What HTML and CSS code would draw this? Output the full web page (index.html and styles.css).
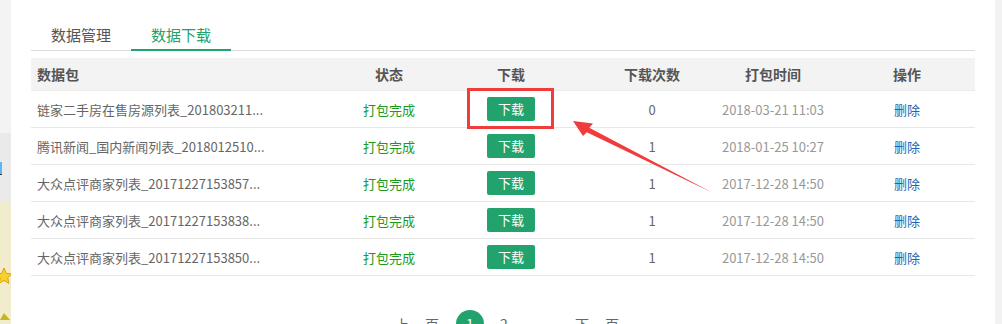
FILE: index.html
```html
<!DOCTYPE html>
<html lang="zh-CN">
<head>
  <meta charset="UTF-8" />
  <title>数据下载</title>
  <link rel="stylesheet" href="styles.css">
</head>
<body>
  <div class="page">
    <aside class="side-left">
      <div class="side-top"></div>
      <div class="side-mid"><span class="side-mark"></span></div>
      <div class="side-bottom">
        <svg class="side-star" width="18" height="18" viewBox="0 0 18 18">
          <polygon points="9,1 11.3,6.4 17,6.9 12.7,10.7 14,16.4 9,13.4 4,16.4 5.3,10.7 1,6.9 6.7,6.4" fill="#f7d02a" stroke="#e0a400" stroke-width="1"/>
        </svg>
        <svg class="side-tri" width="11" height="8" viewBox="0 0 11 8">
          <polygon points="4,0 10,7 0,7" fill="#c9b41c"/>
        </svg>
      </div>
    </aside>

    <main class="panel">
      <ul class="tabs">
        <li class="tab">数据管理</li>
        <li class="tab active">数据下载</li>
      </ul>

      <table class="grid">
        <colgroup>
          <col style="width:322px"><col style="width:72px"><col style="width:172px">
          <col style="width:110px"><col style="width:132px"><col style="width:136px">
        </colgroup>
        <thead>
          <tr>
            <th class="name">数据包</th>
            <th>状态</th>
            <th>下载</th>
            <th>下载次数</th>
            <th>打包时间</th>
            <th>操作</th>
          </tr>
        </thead>
        <tbody>
          <tr>
            <td class="name">链家二手房在售房源列表_201803211...</td>
            <td class="status">打包完成</td>
            <td><button class="btn-dl">下载</button></td>
            <td>0</td>
            <td class="time">2018-03-21 11:03</td>
            <td><a class="del">删除</a></td>
          </tr>
          <tr>
            <td class="name">腾讯新闻_国内新闻列表_2018012510...</td>
            <td class="status">打包完成</td>
            <td><button class="btn-dl">下载</button></td>
            <td>1</td>
            <td class="time">2018-01-25 10:27</td>
            <td><a class="del">删除</a></td>
          </tr>
          <tr>
            <td class="name">大众点评商家列表_20171227153857...</td>
            <td class="status">打包完成</td>
            <td><button class="btn-dl">下载</button></td>
            <td>1</td>
            <td class="time">2017-12-28 14:50</td>
            <td><a class="del">删除</a></td>
          </tr>
          <tr>
            <td class="name">大众点评商家列表_20171227153838...</td>
            <td class="status">打包完成</td>
            <td><button class="btn-dl">下载</button></td>
            <td>1</td>
            <td class="time">2017-12-28 14:50</td>
            <td><a class="del">删除</a></td>
          </tr>
          <tr>
            <td class="name">大众点评商家列表_20171227153850...</td>
            <td class="status">打包完成</td>
            <td><button class="btn-dl">下载</button></td>
            <td>1</td>
            <td class="time">2017-12-28 14:50</td>
            <td><a class="del">删除</a></td>
          </tr>
        </tbody>
      </table>

      <div class="pager">
        <span class="pg-text">上一页</span>
        <span class="pg-num current">1</span>
        <span class="pg-num">2</span>
        <span class="pg-text next">下一页</span>
      </div>
    </main>

    <aside class="side-right"></aside>
  </div>

  <!-- screenshot annotation -->
  <svg class="callout" width="1002" height="324" viewBox="0 0 1002 324">
    <rect x="468.5" y="89.5" width="84" height="38" fill="none" stroke="#f03c3c" stroke-width="3"/>
    <polygon points="573,121 593,123.5 589.3,127.8 713,193 586.8,132.2 583,136" fill="#f03c3c"/>
  </svg>
</body>
</html>
```

FILE: styles.css
```css
html, body {
  margin: 0;
  padding: 0;
}
body {
  width: 1002px;
  height: 324px;
  overflow: hidden;
  position: relative;
  font-family: "Noto Sans CJK SC", "Liberation Sans", sans-serif;
  font-size: 13px;
  color: #666;
  background: #fff;
}
.page {
  display: flex;
  height: 324px;
}

/* left strip, a cut-off neighbour panel */
.side-left {
  width: 11px;
  flex: none;
  display: flex;
  flex-direction: column;
  overflow: hidden;
}
.side-top { height: 133px; background: #f3f3f3; }
.side-mid {
  height: 68px;
  background: #eaeaea;
  display: flex;
  flex-direction: column;
}
.side-mark {
  display: block;
  width: 2px;
  height: 12px;
  margin-top: 29px;
  background: #5fb6ee;
  border-bottom: 1px solid #333;
}
.side-bottom {
  flex: 1;
  background: #f1ecce;
  display: flex;
  flex-direction: column;
}
.side-star { margin: 66px 0 0 -5px; display: block; }
.side-tri { margin: 28px 0 0 0; display: block; }

.side-right {
  width: 7px;
  flex: none;
  background: #f2f2f2;
}

/* main panel */
.panel {
  flex: 1;
  padding: 21px 20px 0;
  min-width: 0;
}
.tabs {
  list-style: none;
  margin: 0;
  padding: 0;
  display: flex;
  border-bottom: 1px solid #ddd;
}
.tab {
  width: 100px;
  height: 28px;
  line-height: 28px;
  text-align: center;
  font-size: 15px;
  color: #555;
  border-bottom: 2px solid transparent;
  margin-bottom: -1px;
}
.tab.active {
  color: #22a36d;
  border-bottom-color: #22a36d;
}

.grid {
  margin-top: 7px;
  width: 944px;
  table-layout: fixed;
  border-collapse: collapse;
}
.grid th {
  height: 32px;
  padding: 0;
  background: #f3f3f3;
  font-size: 14px;
  font-weight: bold;
  color: #555;
  text-align: center;
  border-bottom: 1px solid #ececec;
}
.grid td {
  height: 36px;
  padding: 0;
  text-align: center;
  border-bottom: 1px solid #e8e8e8;
  white-space: nowrap;
  overflow: hidden;
}
.grid .name {
  text-align: left;
  padding-left: 6px;
}
.status { color: #1c9a1c; }
.time { color: #999; }
.del { color: #1f65b3; cursor: pointer; }
.btn-dl {
  display: inline-block;
  vertical-align: middle;
  width: 48px;
  height: 24px;
  padding: 0;
  border: none;
  border-radius: 2px;
  background: #22a36d;
  color: #fff;
  font-family: inherit;
  font-size: 13px;
  line-height: 24px;
  cursor: pointer;
}

.pager {
  margin: 34px 0 0 364px;
  display: flex;
  align-items: center;
}
.pg-text, .pg-num {
  font-size: 14px;
  color: #666;
  line-height: 28px;
}
.pg-text { letter-spacing: 1px; }
.pg-num {
  width: 28px;
  height: 28px;
  text-align: center;
  margin-left: 6px;
}
.pg-num.current {
  margin-left: 16px;
  border-radius: 50%;
  background: #22a36d;
  color: #fff;
}
.pg-text.next { margin-left: 57px; }

.callout {
  position: absolute;
  left: 0;
  top: 0;
  pointer-events: none;
}
```
